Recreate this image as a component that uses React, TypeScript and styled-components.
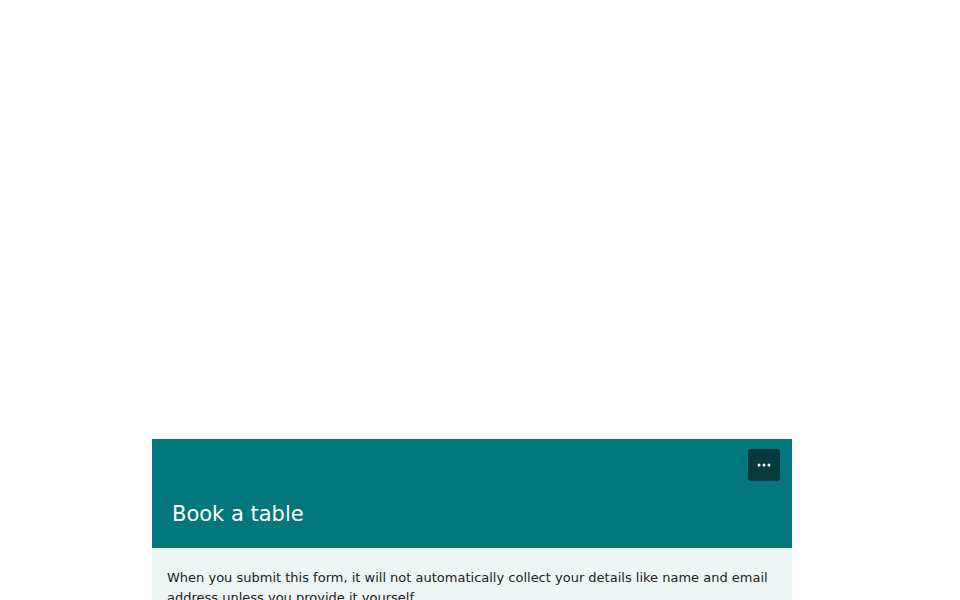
import { createGlobalStyle } from 'styled-components'
import styled from 'styled-components'

const GlobalStyle = createGlobalStyle`
  body {
    margin: 0;
    background: #ffffff;
    font-family: "DejaVu Sans", sans-serif;
  }
`

const Page = styled.div`
  display: flex;
  justify-content: center;
  padding: 439px 16px 0 0;
  min-height: 600px;
  box-sizing: border-box;
`

const Card = styled.div`
  width: 640px;
  display: flex;
  flex-direction: column;
`

const Header = styled.header`
  background: #03787c;
  padding: 10px 12px 20px 20px;
  display: flex;
  flex-direction: column;
`

const MoreButton = styled.button`
  align-self: flex-end;
  width: 32px;
  height: 32px;
  border: none;
  border-radius: 3px;
  background: #073a3c;
  display: flex;
  align-items: center;
  justify-content: center;
  padding: 0;
  cursor: pointer;
`

const Title = styled.h1`
  margin: 19px 0 0;
  font-size: 21px;
  line-height: 28px;
  font-weight: normal;
  color: #ffffff;
`

const Body = styled.div`
  background: #eef5f5;
  padding: 20px 15px 20px;
`

const Notice = styled.p`
  margin: 0;
  font-size: 13px;
  line-height: 20px;
  color: #222222;
`

const App = () => {
  return (
    <>
      <GlobalStyle />
      <Page>
        <Card>
          <Header>
            <MoreButton aria-label='More options'>
              <svg width='14' height='4' viewBox='0 0 14 4'>
                <circle cx='2' cy='2' r='1.5' fill='#fff' />
                <circle cx='7' cy='2' r='1.5' fill='#fff' />
                <circle cx='12' cy='2' r='1.5' fill='#fff' />
              </svg>
            </MoreButton>
            <Title>Book a table</Title>
          </Header>
          <Body>
            <Notice>
              When you submit this form, it will not automatically collect your details like name and email address
              unless you provide it yourself.
            </Notice>
          </Body>
        </Card>
      </Page>
    </>
  )
}

export default App
